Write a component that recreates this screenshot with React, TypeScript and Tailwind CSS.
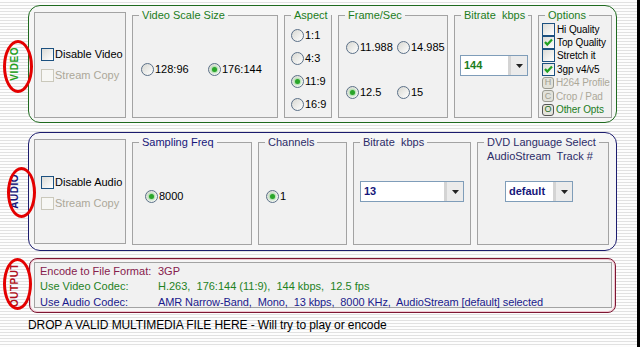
import React from "react";

const FONT = "font-['Liberation_Sans',Arial,sans-serif]";
const GREEN = "text-[#1c7d1c]";
const NAVY = "text-[#16167a]";

function CheckBox({ checked = false, disabled = false }: { checked?: boolean; disabled?: boolean }) {
  return (
    <span
      className={`relative inline-block w-[13px] h-[13px] shrink-0 border ${
        disabled ? "border-[#cac8bb] bg-[#f7f7f4]" : "border-[#1c5180] bg-linear-to-br from-[#dcdcd7] to-white"
      }`}
    >
      {checked && (
        <svg viewBox="0 0 11 11" className="absolute inset-0 w-[11px] h-[11px]">
          <path d="M2 5 L4.3 7.6 L9 2.6" fill="none" stroke="#21a121" strokeWidth="2.2" />
        </svg>
      )}
    </span>
  );
}

function Radio({ checked = false }: { checked?: boolean }) {
  return (
    <span className="inline-flex items-center justify-center w-[13px] h-[13px] shrink-0 rounded-full border border-[#5b7088] bg-linear-to-br from-[#d8d8d2] to-white">
      {checked && <span className="w-[5px] h-[5px] rounded-full bg-[#2aa52a] shadow-[0_0_2px_1px_#9bdc9b]" />}
    </span>
  );
}

function RadioItem({ checked, label, className = "" }: { checked?: boolean; label: string; className?: string }) {
  return (
    <div className={`flex items-center gap-[1px] ${className}`}>
      <Radio checked={checked} />
      <span>{label}</span>
    </div>
  );
}

function CheckItem({ checked, disabled, label }: { checked?: boolean; disabled?: boolean; label: string }) {
  return (
    <div className="flex items-center gap-[1px] h-[21px]">
      <CheckBox checked={checked} disabled={disabled} />
      <span className={disabled ? "text-[#aca899]" : "text-black"}>{label}</span>
    </div>
  );
}

function Box({
  legend,
  color,
  className,
  children,
}: {
  legend: string;
  color: string;
  className: string;
  children?: React.ReactNode;
}) {
  return (
    <fieldset className={`shrink-0 border border-[#a3a3a3] bg-[#f1f1f1] h-[109px] ${className}`}>
      <legend className={`ml-[6px] px-[3px] leading-[13px] whitespace-pre ${color}`}>{legend}</legend>
      {children}
    </fieldset>
  );
}

function Combo({ value, color, className }: { value: string; color: string; className: string }) {
  return (
    <div className={`flex h-[21px] border border-[#7f9db9] bg-white ${className}`}>
      <div className={`flex-1 flex items-center pl-[3px] font-bold ${color}`}>{value}</div>
      <div className="w-[19px] flex items-center justify-center border-l-[3px] border-l-[#d4d4d4] bg-[#ebebeb]">
        <svg viewBox="0 0 7 4" className="w-[7px] h-[4px]">
          <path d="M0 0 H7 L3.5 4 Z" fill="#222" />
        </svg>
      </div>
    </div>
  );
}

function SideLabel({ text, color }: { text: string; color: string }) {
  return (
    <div className="w-[28px] shrink-0 flex items-center justify-center">
      <span className={`[writing-mode:vertical-rl] rotate-180 text-[10px] font-bold tracking-[0.5px] ${color}`}>{text}</span>
    </div>
  );
}

function OptionRow({ children }: { children: React.ReactNode }) {
  return <div className="flex items-center gap-[2px] h-[13.4px] whitespace-nowrap">{children}</div>;
}

function MiniButton({ letter, enabled }: { letter: string; enabled?: boolean }) {
  return (
    <span
      className={`inline-flex items-center justify-center w-[12px] h-[12px] shrink-0 rounded-[3px] border text-[9px] leading-none ${
        enabled ? "border-[#555] bg-[#e4e4dc] text-[#1c6d1c]" : "border-[#9a9a90] bg-[#e2e2da] text-[#a09e90]"
      }`}
    >
      {letter}
    </span>
  );
}

export default function App() {
  return (
    <div className={`flex w-[640px] h-[347px] overflow-hidden text-[11px] text-black ${FONT}`}>
      <div className="relative w-[637px] h-full pt-[5px] [background-image:repeating-linear-gradient(to_bottom,#fdfdfd_0px,#fdfdfd_2px,#e1e1e1_2px,#e1e1e1_3px)]">
        {/* VIDEO */}
        <div className="flex h-[118px]">
          <SideLabel text="VIDEO" color="text-[#1fa01f]" />
          <div className="flex gap-[6px] w-[589px] h-[118px] border border-[#1f6a1f] rounded-[12px] bg-[#f6f6f6] pl-[5px] pt-[3px]">
            <div className="shrink-0 w-[92px] h-[106px] mt-[3px] border border-[#a3a3a3] bg-[#f1f1f1] flex flex-col justify-center pl-[6px]">
              <CheckItem label="Disable Video" />
              <CheckItem label="Stream Copy" disabled />
            </div>
            <Box legend="Video Scale Size" color={GREEN} className="w-[146px]">
              <div className="h-[95px] flex items-center pl-[8px]">
                <RadioItem label="128:96" className="w-[67px]" />
                <RadioItem label="176:144" checked />
              </div>
            </Box>
            <Box legend="Aspect" color={GREEN} className="w-[48px]">
              <div className="flex flex-col pl-[6px] pt-[2px]">
                <RadioItem label="1:1" className="h-[23px]" />
                <RadioItem label="4:3" className="h-[23px]" />
                <RadioItem label="11:9" checked className="h-[23px]" />
                <RadioItem label="16:9" className="h-[23px]" />
              </div>
            </Box>
            <Box legend="Frame/Sec" color={GREEN} className="w-[110px]">
              <div className="flex flex-col gap-[22px] pl-[7px] pt-[14px]">
                <div className="flex h-[23px]">
                  <RadioItem label="11.988" className="w-[51px]" />
                  <RadioItem label="14.985" />
                </div>
                <div className="flex h-[23px]">
                  <RadioItem label="12.5" checked className="w-[51px]" />
                  <RadioItem label="15" />
                </div>
              </div>
            </Box>
            <Box legend="Bitrate  kbps" color={GREEN} className="w-[78px]">
              <div className="pl-[5px] pt-[33px]">
                <Combo value="144" color="text-[#1c7d1c]" className="w-[68px]" />
              </div>
            </Box>
            <Box legend="Options" color={GREEN} className="w-[74px]">
              <div className="flex flex-col pl-[3px] pt-[0.5px] text-[10px] tracking-[-0.1px]">
                <OptionRow>
                  <CheckBox />
                  <span>Hi Quality</span>
                </OptionRow>
                <OptionRow>
                  <CheckBox checked />
                  <span>Top Quality</span>
                </OptionRow>
                <OptionRow>
                  <CheckBox />
                  <span>Stretch it</span>
                </OptionRow>
                <OptionRow>
                  <CheckBox checked />
                  <span>3gp v4/v5</span>
                </OptionRow>
                <OptionRow>
                  <MiniButton letter="H" />
                  <span className="text-[#aca899]">H264 Profile</span>
                </OptionRow>
                <OptionRow>
                  <MiniButton letter="C" />
                  <span className="text-[#aca899]">Crop / Pad</span>
                </OptionRow>
                <OptionRow>
                  <MiniButton letter="O" enabled />
                  <span className="text-[#1c7d1c]">Other Opts</span>
                </OptionRow>
              </div>
            </Box>
          </div>
        </div>

        {/* AUDIO */}
        <div className="flex h-[119px] mt-[9px]">
          <SideLabel text="AUDIO" color="text-[#14147a]" />
          <div className="flex gap-[6px] w-[589px] h-[119px] border border-[#1c1c6e] rounded-[12px] bg-[#f6f6f6] pl-[5px] pt-[3px]">
            <div className="shrink-0 w-[92px] h-[105px] mt-[3px] border border-[#a3a3a3] bg-[#f1f1f1] flex flex-col justify-center pl-[6px] pt-[3px]">
              <CheckItem label="Disable Audio" />
              <CheckItem label="Stream Copy" disabled />
            </div>
            <Box legend="Sampling Freq" color={NAVY} className="w-[120px]">
              <div className="h-[95px] flex items-center pl-[12px]">
                <RadioItem label="8000" checked />
              </div>
            </Box>
            <Box legend="Channels" color="text-[#2c2c68]" className="w-[89px]">
              <div className="h-[95px] flex items-center pl-[7px]">
                <RadioItem label="1" checked />
              </div>
            </Box>
            <Box legend="Bitrate  kbps" color="text-[#2c2c68]" className="w-[118px]">
              <div className="pl-[6px] pt-[32px]">
                <Combo value="13" color={NAVY} className="w-[104px]" />
              </div>
            </Box>
            <Box legend="DVD Language Select" color="text-[#2c2c68]" className="w-[132px]">
              <div className="text-center pr-[6px] leading-[13px] pt-[1px] text-[#2c2c68] whitespace-pre">AudioStream  Track #</div>
              <div className="pl-[27px] pt-[18px]">
                <Combo value="default" color={NAVY} className="w-[68px]" />
              </div>
            </Box>
          </div>
        </div>

        {/* OUTPUT */}
        <div className="flex h-[55px] mt-[7px]">
          <div className="w-[28px] shrink-0 flex flex-col justify-end items-center pb-[6px]">
            <div className="h-[42px] overflow-hidden flex items-end">
              <span className="[writing-mode:vertical-rl] rotate-180 text-[10px] font-bold tracking-[0.5px] text-[#b01020]">OUTPUT</span>
            </div>
          </div>
          <div className="ml-[1px] w-[587px] h-[55px] border border-[#7d1632] rounded-[8px] bg-[#f6f6f6] shadow-[inset_0_0_0_1px_#efc5d0] pl-[4px] pt-[3px]">
            <div className="w-[578px] h-[46px] border border-[#a3a3a3] bg-[#f1f1f1] pl-[5px] whitespace-pre">
              <div className="flex h-[15.5px] items-center text-[#86204c]">
                <span className="w-[118px]">Encode to File Format:</span>
                <span>3GP</span>
              </div>
              <div className="flex h-[15.5px] items-center text-[#1f821f]">
                <span className="w-[118px]">Use Video Codec:</span>
                <span>H.263,  176:144 (11:9),  144 kbps,  12.5 fps</span>
              </div>
              <div className="flex h-[15.5px] items-center text-[#1a1a8c]">
                <span className="w-[118px]">Use Audio Codec:</span>
                <span className="tracking-[-0.1px]">AMR Narrow-Band,  Mono,  13 kbps,  8000 KHz,  AudioStream [default] selected</span>
              </div>
            </div>
          </div>
        </div>

        <div className="pl-[28px] mt-[5px] leading-[14px] text-[12px] tracking-[-0.1px]">
          DROP A VALID MULTIMEDIA FILE HERE - Will try to play or encode
        </div>

        {/* hand-drawn red circles */}
        <div className="absolute left-[3px] top-[40px] w-[30px] h-[53px] rounded-[50%] border-[3px] border-[#e40000]" />
        <div className="absolute left-[7px] top-[167px] w-[29px] h-[51px] rounded-[50%] border-[3px] border-[#e40000]" />
        <div className="absolute left-[3px] top-[258px] w-[29px] h-[52px] rounded-[50%] border-[3px] border-[#e40000]" />
      </div>
      <div className="w-[3px] h-full bg-black" />
    </div>
  );
}
